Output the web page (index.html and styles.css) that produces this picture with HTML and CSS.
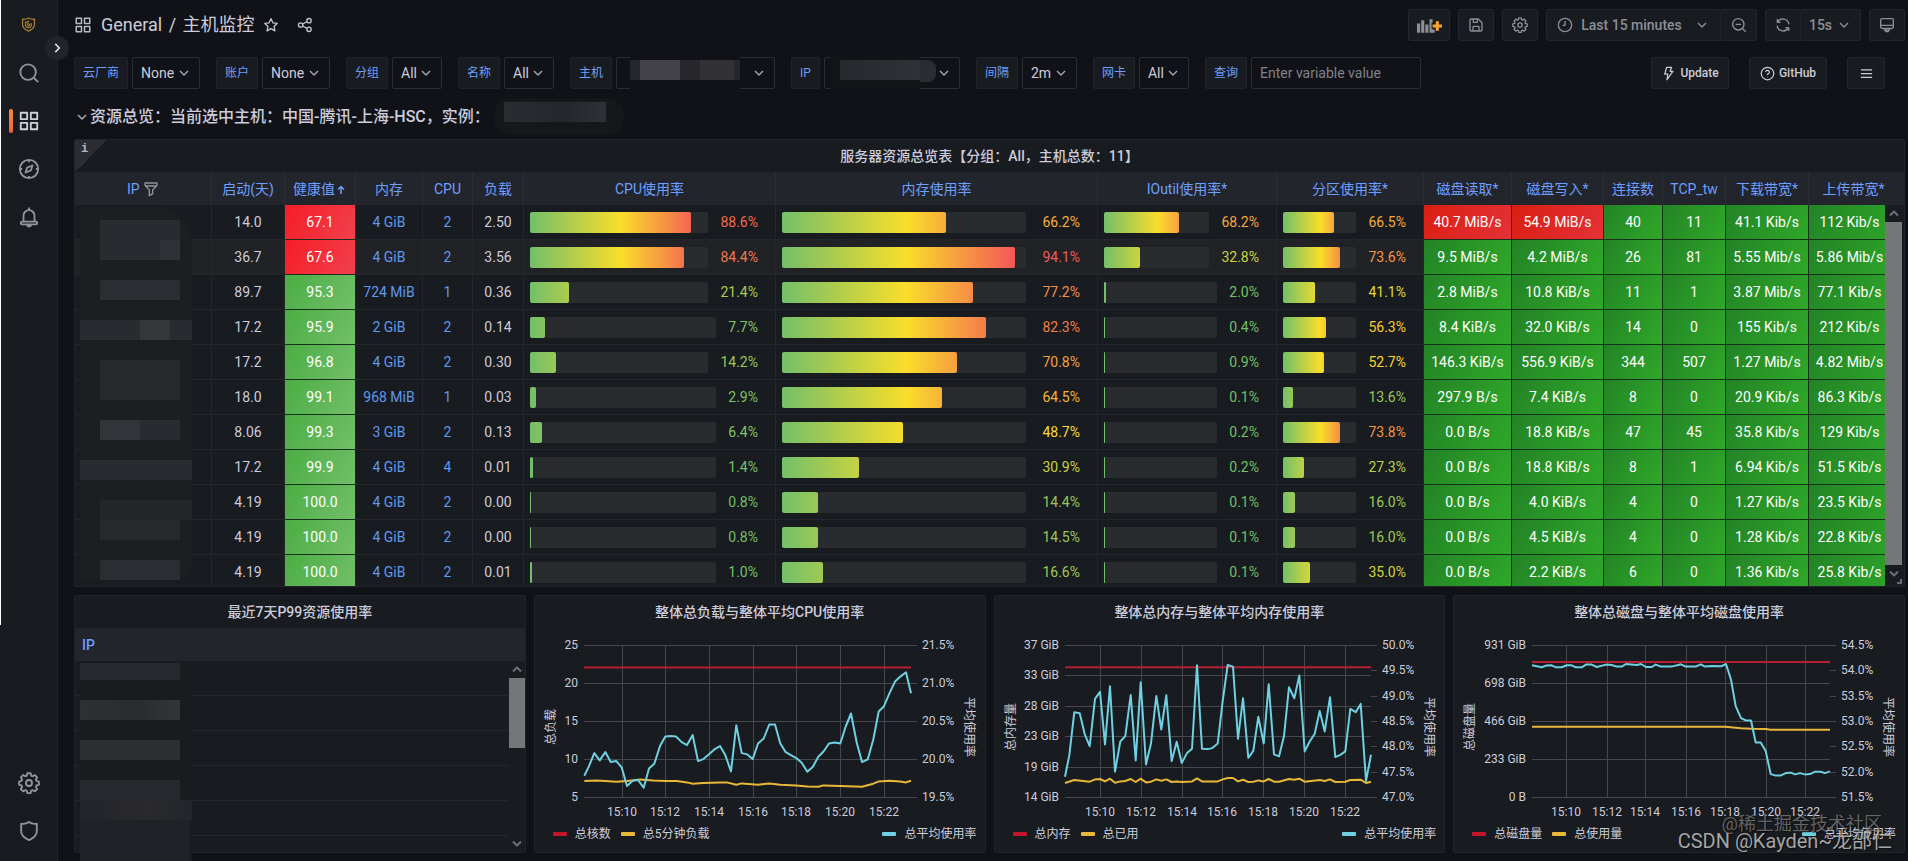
FILE: index.html
```html
<!DOCTYPE html>
<html lang="zh-CN">
<head>
<meta charset="utf-8">
<title>主机监控 - General</title>
<meta name="viewport" content="width=device-width, initial-scale=1">
<link rel="stylesheet" href="styles.css">
</head>
<body>
<svg class="sprite" aria-hidden="true">
  <symbol id="i-search" viewBox="0 0 24 24"><circle cx="11" cy="11" r="8.5"/><path d="M17.2 17.2 22 22"/></symbol>
  <symbol id="i-apps" viewBox="0 0 24 24"><path d="M3 3h7v7H3zM14 3h7v7h-7zM3 14h7v7H3zM14 14h7v7h-7z"/></symbol>
  <symbol id="i-compass" viewBox="0 0 24 24"><circle cx="12" cy="12" r="10"/><path d="M15.8 8.2 14 13.6l-5.8 2.2L10 10.4zM12 2v2.5M12 19.5V22M2 12h2.5M19.5 12H22"/></symbol>
  <symbol id="i-bell" viewBox="0 0 24 24"><path d="M12 1.5V4M6 17v-6.500a6 6 0 0 1 12 0V17M4.500 17h15a1.500 1.500 0 0 1 0 3h-15a1.500 1.500 0 0 1 0-3zM9.500 20.500a2.600 2.600 0 0 0 5 0"/></symbol>
  <symbol id="i-cog" viewBox="0 0 24 24"><circle cx="12" cy="12" r="3.300"/><path d="M10.200 2h3.600l.7 2.700 1.500.6 2.400-1.400 2.500 2.500-1.400 2.400.6 1.500 2.700.7v3.600l-2.700.7-.6 1.500 1.400 2.400-2.500 2.500-2.400-1.400-1.500.6-.7 2.700h-3.600l-.7-2.700-1.500-.6-2.400 1.400-2.500-2.500 1.400-2.400-.6-1.500L1.200 14.600V11l2.700-.7.6-1.500L3.100 6.400l2.500-2.500L8 5.300l1.500-.6z" transform="translate(0 -.6)"/></symbol>
  <symbol id="i-shield" viewBox="0 0 24 24"><path d="M12 2.200C9.500 4 6.500 4.600 3.500 4v8.500c0 4.500 4.500 7.500 8.500 9.500 4-2 8.500-5 8.500-9.500V4c-3 .6-6 0-8.500-1.800z"/></symbol>
  <symbol id="i-down" viewBox="0 0 24 24"><path d="m6 9 6 6 6-6"/></symbol>
  <symbol id="i-up" viewBox="0 0 24 24"><path d="m6 15 6-6 6 6"/></symbol>
  <symbol id="i-right" viewBox="0 0 24 24"><path d="m9 5 7 7-7 7"/></symbol>
  <symbol id="i-star" viewBox="0 0 24 24"><path d="m12 2.500 2.900 6.200 6.600.8-4.900 4.600 1.300 6.700-5.900-3.300-5.900 3.300 1.300-6.700L2.500 9.500l6.600-.8z"/></symbol>
  <symbol id="i-share" viewBox="0 0 24 24"><circle cx="18" cy="5.500" r="3.300"/><circle cx="5.500" cy="12" r="3.300"/><circle cx="18" cy="18.500" r="3.300"/><path d="m8.500 10.500 6.500-3.500M8.500 13.500l6.500 3.500"/></symbol>
  <symbol id="i-save" viewBox="0 0 24 24"><path d="M3 5a2 2 0 0 1 2-2h10.500L21 8.500V19a2 2 0 0 1-2 2H5a2 2 0 0 1-2-2zM8 3v5h6V3.500M7.500 21v-6a1 1 0 0 1 1-1h7a1 1 0 0 1 1 1v6"/></symbol>
  <symbol id="i-clock" viewBox="0 0 24 24"><circle cx="12" cy="12" r="10"/><path d="M12 6v6.500H8.500"/></symbol>
  <symbol id="i-zoomout" viewBox="0 0 24 24"><circle cx="11" cy="11" r="8.500"/><path d="M17.200 17.200 22 22M7 11h8"/></symbol>
  <symbol id="i-sync" viewBox="0 0 24 24"><path d="M3.500 3v5h5M3.800 8A9 9 0 0 1 20.800 11M20.500 21v-5h-5M20.200 16A9 9 0 0 1 3.200 13"/></symbol>
  <symbol id="i-monitor" viewBox="0 0 24 24"><path d="M4.500 2.500h15a2 2 0 0 1 2 2V15a2 2 0 0 1-2 2h-15a2 2 0 0 1-2-2V4.500a2 2 0 0 1 2-2zM2.500 12.500h19M8 17v2.500h8V17M10 19.500V22h4v-2.500"/></symbol>
  <symbol id="i-bolt" viewBox="0 0 24 24"><path d="M9 2h8l-2.500 6.500H19L9.500 22l1.500-9H6z"/></symbol>
  <symbol id="i-help" viewBox="0 0 24 24"><circle cx="12" cy="12" r="10"/><path d="M9 9.500A3 3 0 1 1 12 13v1.500M12 17v1"/></symbol>
  <symbol id="i-bars" viewBox="0 0 24 24"><path d="M3 6h18M3 12h18M3 18h18"/></symbol>
  <symbol id="i-filter" viewBox="0 0 24 24"><path d="M3 3h18v3.500l-6.500 7V19l-5 3v-8.500L3 6.500zM3.500 7.500h17"/></symbol>
  <symbol id="i-arrow" viewBox="0 0 24 24"><path d="M12 20V5M6 11l6-6 6 6"/></symbol>
</svg>

<nav class="sidebar" aria-label="主导航">
  <a class="nav-item logo" href="#" aria-label="首页">
    <svg viewBox="0 0 24 24"><path d="M12 1.500C9 3.500 6 4 2.500 3.500V12c0 5.500 5 8.500 9.500 10.500 4.500-2 9.500-5 9.500-10.500V3.500C18 4 15 3.500 12 1.500z"/><path d="M8 7.500c-2.500 4-1 9 4 10 4-.8 5.500-4.500 4-8M8.500 8.500 13 6.500M12 9.500c-2 1.500-2 4 .5 4.500 1.500-.5 1.500-2 .5-3"/></svg>
  </a>
  <a class="nav-item" href="#" aria-label="搜索"><svg class="icon"><use href="#i-search"/></svg></a>
  <a class="nav-item active" href="#" aria-label="仪表盘"><svg class="icon"><use href="#i-apps"/></svg></a>
  <a class="nav-item" href="#" aria-label="探索"><svg class="icon"><use href="#i-compass"/></svg></a>
  <a class="nav-item" href="#" aria-label="告警"><svg class="icon"><use href="#i-bell"/></svg></a>
  <span class="nav-space"></span>
  <a class="nav-item" href="#" aria-label="设置"><svg class="icon"><use href="#i-cog"/></svg></a>
  <a class="nav-item" href="#" aria-label="管理"><svg class="icon"><use href="#i-shield"/></svg></a>
  <button class="nav-toggle" type="button" aria-label="展开菜单"><svg class="icon"><use href="#i-right"/></svg></button>
</nav>

<main class="main">
  <header class="topbar">
    <svg class="icon head-icon"><use href="#i-apps"/></svg>
    <h1 class="crumbs"><a href="#">General</a> <span>/</span> <a href="#">主机监控</a></h1>
    <button class="plain" type="button" aria-label="收藏"><svg class="icon"><use href="#i-star"/></svg></button>
    <button class="plain share" type="button" aria-label="分享"><svg class="icon"><use href="#i-share"/></svg></button>
    <div class="tools">
      <button class="tool add" type="button" aria-label="添加面板">
        <svg class="add-icon" viewBox="0 0 24 14"><path class="bars" d="M0 5h3v9H0zM4 2h3v12H4zM8 6h3v8H8zM12 1h3v3h-1v6h1v4h-3zM15 11h2v3h-2z"/><path class="plus" d="M18 3h3v3h3v3h-3v3h-3V9h-3V6h3z"/></svg>
      </button>
      <button class="tool" type="button" aria-label="保存"><svg class="icon"><use href="#i-save"/></svg></button>
      <button class="tool" type="button" aria-label="设置"><svg class="icon"><use href="#i-cog"/></svg></button>
      <div class="tool-group">
        <button class="tool time" type="button"><svg class="icon"><use href="#i-clock"/></svg><span>Last 15 minutes</span><svg class="icon chev"><use href="#i-down"/></svg></button>
        <button class="tool" type="button" aria-label="缩小"><svg class="icon"><use href="#i-zoomout"/></svg></button>
      </div>
      <div class="tool-group">
        <button class="tool" type="button" aria-label="刷新"><svg class="icon"><use href="#i-sync"/></svg></button>
        <button class="tool every" type="button"><span>15s</span><svg class="icon chev"><use href="#i-down"/></svg></button>
      </div>
      <button class="tool" type="button" aria-label="视图模式"><svg class="icon"><use href="#i-monitor"/></svg></button>
    </div>
  </header>

  <form class="vars">
    <div class="var"><label for="v1">云厂商</label><span class="pick"><select id="v1" class="w-none"><option>None</option></select><svg class="icon"><use href="#i-down"/></svg></span></div>
    <div class="var"><label for="v2">账户</label><span class="pick"><select id="v2" class="w-none"><option>None</option></select><svg class="icon"><use href="#i-down"/></svg></span></div>
    <div class="var"><label for="v3">分组</label><span class="pick"><select id="v3" class="w-all"><option>All</option></select><svg class="icon"><use href="#i-down"/></svg></span></div>
    <div class="var"><label for="v4">名称</label><span class="pick"><select id="v4" class="w-all"><option>All</option></select><svg class="icon"><use href="#i-down"/></svg></span></div>
    <div class="var"><label for="v5">主机</label><span class="pick"><select id="v5" class="w-host"></select><i class="mask mask-host"></i><svg class="icon"><use href="#i-down"/></svg></span></div>
    <div class="var"><label for="v6">IP</label><span class="pick"><select id="v6" class="w-ip"></select><i class="mask mask-ip"></i><svg class="icon"><use href="#i-down"/></svg></span></div>
    <div class="var"><label for="v7">间隔</label><span class="pick"><select id="v7" class="w-step"><option>2m</option></select><svg class="icon"><use href="#i-down"/></svg></span></div>
    <div class="var"><label for="v8">网卡</label><span class="pick"><select id="v8" class="w-all"><option>All</option></select><svg class="icon"><use href="#i-down"/></svg></span></div>
    <div class="var"><label for="v9">查询</label><input id="v9" type="text" placeholder="Enter variable value"></div>
    <div class="links">
      <a class="link" href="#"><svg class="icon"><use href="#i-bolt"/></svg>Update</a>
      <a class="link" href="#"><svg class="icon"><use href="#i-help"/></svg>GitHub</a>
      <button class="link menu" type="button" aria-label="菜单"><svg class="icon"><use href="#i-bars"/></svg></button>
    </div>
  </form>

  <h2 class="row-title"><svg class="icon"><use href="#i-down"/></svg><span>资源总览：当前选中主机：中国-腾讯-上海-HSC，实例：</span><i class="mask-row"></i></h2>

  <section class="panel overview">
    <span class="info">i</span>
    <h3 class="panel-title">服务器资源总览表【分组：All，主机总数：11】</h3>
    <div class="viewport">
      <table class="hosts">
        <colgroup>
          <col class="c-ip"><col class="c-up"><col class="c-score"><col class="c-ram"><col class="c-cores"><col class="c-load"><col class="c-cpu"><col><col class="c-io"><col class="c-part"><col class="c-read"><col class="c-write"><col class="c-conn"><col class="c-tw"><col class="c-down"><col class="c-upl">
        </colgroup>
        <thead>
          <tr>
            <th>IP <svg class="icon filter"><use href="#i-filter"/></svg></th><th>启动(天)</th><th>健康值<svg class="icon sort"><use href="#i-arrow"/></svg></th><th>内存</th><th>CPU</th><th>负载</th><th>CPU使用率</th><th>内存使用率</th><th>IOutil使用率*</th><th>分区使用率*</th><th>磁盘读取*</th><th>磁盘写入*</th><th>连接数</th><th>TCP_tw</th><th>下载带宽*</th><th>上传带宽*</th>
          </tr>
        </thead>
        <tbody id="hosts"></tbody>
      </table>
      <i class="mask-list"></i>
      <div class="scroll"><svg class="icon"><use href="#i-up"/></svg><span class="thumb"></span><svg class="icon"><use href="#i-down"/></svg></div>
      <i class="grip"></i>
    </div>
  </section>

  <div class="charts">
    <section class="panel recent">
      <h3 class="panel-title">最近7天P99资源使用率</h3>
      <div class="recent-view">
        <table class="recent-table">
          <thead><tr><th>IP</th></tr></thead>
          <tbody><tr><td></td></tr><tr><td></td></tr><tr><td></td></tr><tr><td></td></tr><tr><td></td></tr></tbody>
        </table>
        <i class="mask-recent"></i>
        <div class="scroll short"><svg class="icon"><use href="#i-up"/></svg><span class="thumb"></span><svg class="icon"><use href="#i-down"/></svg></div>
      </div>
    </section>
    <section class="panel">
      <h3 class="panel-title">整体总负载与整体平均CPU使用率</h3>
      <div class="plot" data-chart="cpu"></div>
      <div class="legend"><span class="red">总核数</span><span class="yellow">总5分钟负载</span><span class="blue">总平均使用率</span></div>
    </section>
    <section class="panel">
      <h3 class="panel-title">整体总内存与整体平均内存使用率</h3>
      <div class="plot" data-chart="mem"></div>
      <div class="legend"><span class="red">总内存</span><span class="yellow">总已用</span><span class="blue">总平均使用率</span></div>
    </section>
    <section class="panel">
      <h3 class="panel-title">整体总磁盘与整体平均磁盘使用率</h3>
      <div class="plot" data-chart="disk"></div>
      <div class="legend"><span class="red">总磁盘量</span><span class="yellow">总使用量</span><span class="blue">总平均使用率</span></div>
    </section>
  </div>
</main>
<div class="stamp stamp-site">@稀土掘金技术社区</div>
<div class="stamp stamp-author">CSDN @Kayden~龙邵仁</div>
<script src="app.js"></script>
</body>
</html>
```
FILE: styles.css
```css
* { box-sizing: border-box; }

body {
  margin: 0;
  min-height: 100vh;
  display: flex;
  position: relative;
  overflow-x: hidden;
  background: #111217;
  color: #ccccdc;
  font: 14px/20px Roboto, "Noto Sans CJK SC", sans-serif;
}

a { color: inherit; text-decoration: none; }
button, input, select { font: inherit; color: inherit; }
h1, h2, h3 { margin: 0; font-weight: 400; }
.sprite { position: absolute; width: 0; height: 0; }
.icon {
  width: 16px;
  height: 16px;
  flex: none;
  fill: none;
  stroke: currentColor;
  stroke-width: 2;
  stroke-linejoin: round;
}

/* Sidebar */
.sidebar {
  position: relative;
  flex: none;
  width: 58px;
  display: flex;
  flex-direction: column;
  padding-bottom: 6px;
  border-right: 1px solid #22242a;
  background: linear-gradient(#fff, #fff) 0 0 / 1px 625px no-repeat, #181b1f;
}
.nav-item {
  position: relative;
  height: 48px;
  display: flex;
  align-items: center;
  justify-content: center;
  color: #93949e;
}
.nav-item .icon { width: 22px; height: 22px; }
.nav-item.active { color: #d0d0dc; }
.nav-item.active::before {
  content: "";
  position: absolute;
  left: 9px;
  top: 12px;
  width: 4px;
  height: 24px;
  border-radius: 2px;
  background: linear-gradient(#f08c3c, #f0643c);
}
.logo { height: 49px; }
.logo svg { width: 15px; height: 15px; fill: none; stroke: #a8812e; stroke-width: 2; }
.nav-space { flex: 1; }
.nav-toggle {
  position: absolute;
  left: 45px;
  top: 36px;
  width: 24px;
  height: 24px;
  padding: 0;
  display: flex;
  align-items: center;
  justify-content: center;
  border: 0;
  border-radius: 50%;
  background: #212429;
  color: #dcdce6;
  z-index: 2;
}
.nav-toggle .icon { width: 14px; height: 14px; stroke-width: 3; }

/* Top bar */
.main { flex: 1; min-width: 0; padding: 0 3px 8px 16px; }
.topbar { height: 50px; display: flex; align-items: center; }
.head-icon { width: 18px; height: 18px; color: #b9b9c6; }
.crumbs { margin: 0 8px 0 9px; font-size: 18px; line-height: 24px; white-space: nowrap; }
.crumbs span { margin: 0 2px; }
.plain { display: flex; padding: 0; border: 0; background: none; color: #c3c3d0; }
.share { margin-left: 18px; }
.tools { margin-left: auto; display: flex; gap: 8px; color: #8d8e97; }
.tool {
  height: 32px;
  width: 36px;
  padding: 0;
  display: flex;
  align-items: center;
  justify-content: center;
  border: 1px solid #24262c;
  border-radius: 2px;
  background: #181b1f;
  font-weight: 500;
}
.tool-group { display: flex; }
.tool-group .tool + .tool { border-left-color: #202228; margin-left: -1px; width: 37px; }
.add { width: 42px; }
.add-icon { width: 25px; height: 15px; }
.add-icon .bars { fill: #8d8e97; }
.add-icon .plus { fill: #f7a32d; }
.tool.time { width: 175px; gap: 8px; }
.tool.time .chev { margin-left: 4px; }
.tool-group .tool.every { width: 61px; gap: 4px; }

/* Variables */
.vars { display: flex; gap: 16px; margin-top: 7px; padding-right: 20px; }
.var { display: flex; gap: 4px; }
.var label {
  height: 32px;
  padding: 0 8px;
  border: 1px solid #202329;
  border-radius: 2px;
  background: #181b1f;
  color: #6e9fff;
  font-size: 12px;
  line-height: 30px;
  white-space: nowrap;
}
.pick { position: relative; display: block; }
.pick .icon { position: absolute; right: 8px; top: 8px; color: #a8a8b5; pointer-events: none; }
.pick select, .var input {
  display: block;
  height: 32px;
  margin: 0;
  padding: 0 8px;
  border: 1px solid #2b2d34;
  border-radius: 2px;
  background: #111217;
  appearance: none;
}
.w-none { width: 68px; }
.w-all { width: 50px; }
.w-step { width: 55px; }
.w-host { width: 159px; }
.w-ip { width: 136px; }
.var input { width: 170px; }
.var input::placeholder { color: #80818b; opacity: 1; }
.mask { position: absolute; top: 0; height: 32px; }
.mask-host {
  left: 14px;
  width: 110px;
  background:
    linear-gradient(#424248, #424248) 10px 3px / 40px 20px no-repeat,
    linear-gradient(#313136, #313136) 70px 3px / 34px 20px no-repeat,
    linear-gradient(#26272c, #26272c) 0 3px / 110px 20px no-repeat,
    #111217;
}
.mask-ip {
  left: 6px;
  width: 90px;
  background:
    linear-gradient(90deg, #28292e, #303136) 10px 3px / 80px 20px no-repeat,
    #121317;
}
.mask-ip::after {
  content: "";
  position: absolute;
  left: 90px;
  top: 3px;
  width: 16px;
  height: 22px;
  border-radius: 0 8px 8px 0;
  background: #2b2c31;
}
.links { margin-left: auto; display: flex; gap: 20px; }
.link {
  height: 32px;
  width: 78px;
  padding: 0;
  display: flex;
  align-items: center;
  justify-content: center;
  gap: 4px;
  border: 1px solid #24262c;
  border-radius: 2px;
  background: #181b1f;
  color: #ccccdc;
  font-size: 12px;
  font-weight: 500;
}
.link .icon { width: 15px; height: 15px; }
.link.menu { width: 38px; }

/* Row heading */
.row-title {
  display: flex;
  align-items: center;
  height: 50px;
  padding-top: 6px;
  font-size: 16px;
  font-weight: 500;
  white-space: nowrap;
}
.row-title .icon { color: #b0b0bd; }
.mask-row {
  width: 130px;
  height: 36px;
  margin-left: 4px;
  border-radius: 16px;
  background: linear-gradient(90deg, #2b2c31, #26272c 60%, #303136) 10px 3px / 102px 20px no-repeat, #16171b;
}

/* Panels */
.panel {
  position: relative;
  min-width: 0;
  border: 1px solid #222429;
  border-radius: 2px;
  background: #181b1f;
}
.panel-title {
  height: 32px;
  font-size: 14px;
  font-weight: 500;
  line-height: 32px;
  text-align: center;
  white-space: nowrap;
}
.info {
  position: absolute;
  left: 0;
  top: 0;
  width: 32px;
  height: 32px;
  padding-left: 6px;
  background: linear-gradient(135deg, #2b2d32 50%, transparent 50%);
  color: #b5b5c2;
  font: bold 12px/18px "Liberation Mono", monospace;
}
.viewport { position: relative; height: 414px; overflow: hidden; }
.hosts { width: 100%; table-layout: fixed; border-spacing: 0; }
.hosts th, .hosts td {
  padding: 0;
  border-right: 1px solid #24262b;
  text-align: center;
  white-space: nowrap;
  overflow: hidden;
}
.hosts th {
  height: 33px;
  border-right-color: #2b2e34;
  background: #22252b;
  color: #6e9fff;
  font-weight: 400;
}
.hosts th .icon { vertical-align: -3px; }
.hosts th .sort { width: 12px; height: 12px; vertical-align: -2px; stroke-width: 3; }
.filter { color: #92939d; }
.hosts td { height: 35px; border-bottom: 1px solid #24262b; background-clip: padding-box; }
.hosts tr.hover td { background-color: #202226; }
.hosts th:last-child, .hosts td:last-child { border-right: 0; }
.hosts td:last-child { padding-right: 14px; }
.hosts th:last-child { padding-right: 6px; }
.c-ip { width: 137px; }
.c-up { width: 73px; }
.c-score { width: 71px; }
.c-ram { width: 67px; }
.c-cores { width: 50px; }
.c-load { width: 51px; }
.c-cpu { width: 252px; }
.c-io { width: 179px; }
.c-part { width: 147px; }
.c-read { width: 88px; }
.c-write { width: 92px; }
.c-conn { width: 59px; }
.c-tw { width: 63px; }
.c-down { width: 83px; }
.c-upl { width: 95px; }
.hosts .blue { color: #5f98ee; }
.hosts td.ok, .hosts td.bad, .hosts td.fine, .hosts td.hot { color: #fff; border-color: #17301a; }
.hosts td.bad { background-image: linear-gradient(120deg, #f51d26, #f2404e); }
.hosts td.ok { background-image: linear-gradient(120deg, #4aad44, #73bf69); }
.hosts td.hot { background-image: linear-gradient(120deg, #d91f12, #e53138); }
.hosts td.fine { background-image: linear-gradient(120deg, #238326, #2fa829); }

.gauge { display: flex; align-items: center; gap: 12px; padding: 0 17px 0 6px; }
.gauge.wide { gap: 16px; }
.track { flex: 1; height: 21px; border-radius: 2px; background: #292c2f; }
.fill {
  display: block;
  height: 100%;
  min-width: 1px;
  width: calc(var(--v) * 1%);
  border-radius: 2px;
  background: linear-gradient(90deg, #73bf69, #fade2a 51%, #f2495c) 0 0 / calc(10000% / var(--v)) 100% no-repeat;
}

/* Scroll bars */
.scroll {
  position: absolute;
  right: 2px;
  top: 33px;
  bottom: 0;
  width: 17px;
  display: flex;
  flex-direction: column;
  align-items: center;
  background: #181b1f;
  box-shadow: 2px 0 #181b1f;
  color: #6e6f75;
}
.scroll .icon { height: 17px; stroke-width: 3; }
.scroll .thumb { flex: 1; width: 100%; background: #75767a; }
.viewport .scroll { padding-bottom: 4px; }
.scroll.short { right: 0; width: 16px; box-shadow: none; }
.scroll.short .thumb { flex: 0 0 70px; margin-bottom: auto; }
.grip {
  position: absolute;
  right: 2px;
  bottom: 2px;
  width: 5px;
  height: 5px;
  border-right: 2px solid #6a6b70;
  border-bottom: 2px solid #6a6b70;
}

/* Obscured addresses */
.mask-list {
  position: absolute;
  left: 5px;
  top: 34px;
  width: 112px;
  height: 375px;
  border-radius: 0 40px 20px 0;
  background:
    linear-gradient(#2f3136, #2f3136) 80px 34px / 20px 20px no-repeat,
    linear-gradient(#292b30, #292b30) 20px 14px / 80px 40px no-repeat,
    linear-gradient(#2b2e33, #2b2e33) 20px 74px / 80px 20px no-repeat,
    linear-gradient(#35363a, #35363a) 60px 114px / 30px 20px no-repeat,
    linear-gradient(#292b30, #292b30) 0 114px / 112px 20px no-repeat,
    linear-gradient(#26282c, #26282c) 20px 154px / 80px 40px no-repeat,
    linear-gradient(#333439, #333439) 20px 214px / 40px 20px no-repeat,
    linear-gradient(#292b31, #292b31) 60px 214px / 40px 20px no-repeat,
    linear-gradient(#2a2b30, #2a2b30) 0 254px / 112px 20px no-repeat,
    linear-gradient(#24262a, #24262a) 20px 294px / 92px 20px no-repeat,
    linear-gradient(#28292c, #28292c) 20px 314px / 80px 20px no-repeat,
    linear-gradient(#2b2d33, #2b2d33) 20px 354px / 80px 20px no-repeat,
    #1c1e22;
}
.mask-recent {
  position: absolute;
  left: 5px;
  top: 35px;
  width: 112px;
  height: 198px;
  background:
    linear-gradient(#26282d, #26282d) 0 0 / 100px 17px no-repeat,
    linear-gradient(90deg, #2d2f33, #2a2d30 60%, #34353a) 0 37px / 100px 20px no-repeat,
    linear-gradient(#2c2e32, #2c2e32) 0 77px / 100px 20px no-repeat,
    linear-gradient(#26282d, #26282d) 0 117px / 100px 20px no-repeat,
    linear-gradient(90deg, #22242b, #2a2a2d 60%, #22252a) 0 137px / 112px 20px no-repeat,
    linear-gradient(#1f2226, #1f2226) 0 157px / 110px 41px no-repeat,
    #191b1f;
}

/* Lower row */
.charts { display: grid; grid-template-columns: repeat(4, 1fr); gap: 8px; margin-top: 8px; }
.recent-view { position: relative; height: 224px; }
.recent-table { width: 100%; border-spacing: 0; }
.recent-table th {
  height: 33px;
  padding: 0 7px;
  background: #22252b;
  color: #6e9fff;
  font-weight: 500;
  text-align: left;
}
.recent-table td { height: 35px; padding: 0; border-bottom: 1px solid #24262b; }
.plot { height: 194px; overflow: hidden; }
.plot svg { display: block; }
.plot text { fill: #ccccdc; font-size: 12px; }
.grid { stroke: #47484d; fill: none; shape-rendering: crispEdges; }
.line { fill: none; stroke-width: 2; stroke-linejoin: round; }
.line.red { stroke: #b51f33; }
.line.yellow { stroke: #eab839; }
.line.blue { stroke: #6ed0e0; }
.legend {
  display: flex;
  gap: 10px;
  height: 24px;
  margin-bottom: 6px;
  padding: 0 8px 0 18px;
  font-size: 12px;
  line-height: 24px;
  white-space: nowrap;
}
.legend span { display: flex; align-items: center; gap: 8px; }
.legend span::before { content: ""; width: 14px; height: 4px; border-radius: 1px; }
.legend .red::before { background: #c4162a; }
.legend .yellow::before { background: #eab839; }
.legend .blue::before { background: #6ed0e0; }
.legend .blue { margin-left: auto; }

/* Image stamps */
.stamp { position: absolute; white-space: nowrap; pointer-events: none; text-shadow: 1px 1px 1px #0008; }
.stamp-site { right: 26px; top: 812px; font-size: 18px; line-height: 24px; color: #b4b4b480; }
.stamp-author { right: 16px; top: 828px; font-size: 20px; line-height: 26px; color: #c8c8c8d0; }
```
FILE: app.js
```js
const hosts = [
  ["14.0", 67.1, "4 GiB", 2, "2.50", 88.6, 66.2, 68.2, 66.5, "40.7 MiB/s", "54.9 MiB/s", 40, 11, "41.1 Kib/s", "112 Kib/s"],
  ["36.7", 67.6, "4 GiB", 2, "3.56", 84.4, 94.1, 32.8, 73.6, "9.5 MiB/s", "4.2 MiB/s", 26, 81, "5.55 Mib/s", "5.86 Mib/s"],
  ["89.7", 95.3, "724 MiB", 1, "0.36", 21.4, 77.2, 2.0, 41.1, "2.8 MiB/s", "10.8 KiB/s", 11, 1, "3.87 Mib/s", "77.1 Kib/s"],
  ["17.2", 95.9, "2 GiB", 2, "0.14", 7.7, 82.3, 0.4, 56.3, "8.4 KiB/s", "32.0 KiB/s", 14, 0, "155 Kib/s", "212 Kib/s"],
  ["17.2", 96.8, "4 GiB", 2, "0.30", 14.2, 70.8, 0.9, 52.7, "146.3 KiB/s", "556.9 KiB/s", 344, 507, "1.27 Mib/s", "4.82 Mib/s"],
  ["18.0", 99.1, "968 MiB", 1, "0.03", 2.9, 64.5, 0.1, 13.6, "297.9 B/s", "7.4 KiB/s", 8, 0, "20.9 Kib/s", "86.3 Kib/s"],
  ["8.06", 99.3, "3 GiB", 2, "0.13", 6.4, 48.7, 0.2, 73.8, "0.0 B/s", "18.8 KiB/s", 47, 45, "35.8 Kib/s", "129 Kib/s"],
  ["17.2", 99.9, "4 GiB", 4, "0.01", 1.4, 30.9, 0.2, 27.3, "0.0 B/s", "18.8 KiB/s", 8, 1, "6.94 Kib/s", "51.5 Kib/s"],
  ["4.19", 100, "4 GiB", 2, "0.00", 0.8, 14.4, 0.1, 16.0, "0.0 B/s", "4.0 KiB/s", 4, 0, "1.27 Kib/s", "23.5 Kib/s"],
  ["4.19", 100, "4 GiB", 2, "0.00", 0.8, 14.5, 0.1, 16.0, "0.0 B/s", "4.5 KiB/s", 4, 0, "1.28 Kib/s", "22.8 Kib/s"],
  ["4.19", 100, "4 GiB", 2, "0.01", 1.0, 16.6, 0.1, 35.0, "0.0 B/s", "2.2 KiB/s", 6, 0, "1.36 Kib/s", "25.8 Kib/s"]
];

const stops = [[115, 191, 105], [250, 222, 42], [242, 73, 92]];

function colorAt(v) {
  const t = v / 50;
  const i = t < 1 ? 0 : 1;
  return "rgb(" + stops[i].map((c, k) => Math.round(c + (stops[i + 1][k] - c) * (t - i))).join(",") + ")";
}

function gauge(v, max, cls = "") {
  return `<td><div class="gauge ${cls}"><span class="track"><span class="fill" style="--v:${(v / max * 100).toFixed(1)}"></span></span>` +
    `<span style="color:${colorAt(v)}">${v.toFixed(1)}%</span></div></td>`;
}

document.getElementById("hosts").innerHTML = hosts.map((h, i) => {
  const disk = i === 0 ? "hot" : "fine";
  return `<tr${i === 1 ? ' class="hover"' : ""}><td></td><td>${h[0]}</td>` +
    `<td class="${h[1] < 80 ? "bad" : "ok"}">${h[1].toFixed(1)}</td>` +
    `<td class="blue">${h[2]}</td><td class="blue">${h[3]}</td><td>${h[4]}</td>` +
    gauge(h[5], 98) + gauge(h[6], 98.7, "wide") + gauge(h[7], 96) + gauge(h[8], 95.5) +
    `<td class="${disk}">${h[9]}</td><td class="${disk}">${h[10]}</td>` +
    h.slice(11).map(v => `<td class="fine">${v}</td>`).join("") + "</tr>";
}).join("");

/* Each series is a list of x,y samples inside the chart's own box [x0, y0, x1, y1]. */
const charts = {
  cpu: {
    box: [162, 196, 1143, 653], left: 49, names: ["总负载", "平均使用率"],
    yl: ["25", "20", "15", "10", "5"], yr: ["21.5%", "21.0%", "20.5%", "20.0%", "19.5%"],
    ticks: [275, 406, 538, 668, 799, 931, 1061], red: 264,
    yellow: "163,605 200,603 226,605 259,607 291,605 330,600 370,603 406,605 440,605 471,609 488,613 520,611 570,609 590,609 619,616 635,612 684,616 718,612 751,616 799,618 832,621 865,622 880,618 931,620 996,622 1030,613 1046,606 1078,604 1111,606 1128,609 1143,604",
    blue: "163,589 177,560 193,521 209,543 226,518 242,548 259,545 275,564 291,620 308,604 324,602 341,625 357,567 373,553 390,500 406,471 422,470 438,471 455,488 471,497 488,467 504,545 520,539 538,524 553,510 570,500 586,527 603,576 619,437 635,521 652,525 668,539 684,492 701,477 718,435 735,435 751,492 767,518 784,528 799,536 815,550 832,577 848,563 865,532 880,517 897,492 914,489 931,492 947,441 963,402 980,489 996,548 1013,540 1030,480 1046,396 1062,380 1078,342 1095,306 1111,291 1128,278 1143,341"
  },
  mem: {
    box: [241, 196, 1159, 653], left: 70, names: ["总内存量", "平均使用率"],
    yl: ["37 GiB", "33 GiB", "28 GiB", "23 GiB", "19 GiB", "14 GiB"], yr: ["50.0%", "49.5%", "49.0%", "48.5%", "48.0%", "47.5%", "47.0%"],
    ticks: [346, 469, 592, 712, 836, 959, 1081], red: 263,
    yellow: "241,611 269,602 315,607 331,600 346,599 361,606 376,598 391,610 407,606 422,605 438,599 453,608 468,598 484,609 499,607 515,600 530,604 545,600 561,608 576,606 591,608 622,606 637,597 652,606 699,606 714,600 729,596 745,596 760,606 775,601 791,608 806,607 821,603 837,606 852,599 868,607 883,607 913,599 929,601 944,598 960,607 1005,602 1020,605 1036,600 1052,608 1082,607 1097,602 1128,601 1144,611 1159,607",
    blue: "241,592 254,528 269,398 285,401 300,464 315,500 331,358 346,337 361,495 376,320 391,577 407,486 422,470 438,346 453,543 468,308 484,555 499,492 515,349 530,450 545,347 561,545 576,487 591,551 607,521 622,508 637,257 652,508 670,509 683,506 699,492 714,364 729,256 745,261 760,478 775,356 791,535 806,514 821,412 837,492 852,314 868,525 883,531 898,470 913,323 929,356 944,288 960,516 975,486 990,463 1005,394 1020,456 1036,353 1052,533 1067,526 1082,516 1097,388 1113,398 1128,373 1144,605 1159,526"
  },
  disk: {
    box: [261, 196, 1155, 653], left: 78, names: ["总磁盘量", "平均使用率"],
    yl: ["931 GiB", "698 GiB", "466 GiB", "233 GiB", "0 B"], yr: ["54.5%", "54.0%", "53.5%", "53.0%", "52.5%", "52.0%", "51.5%"],
    ticks: [364, 485, 601, 722, 841, 962, 1081], red: 247,
    yellow: "261,442 841,442 888,446 918,448 962,449 977,451 1155,451",
    blue: "261,257 290,263 303,258 320,257 333,263 350,263 365,257 380,257 393,263 410,263 423,255 440,255 455,262 484,255 500,256 515,261 530,261 543,253 575,256 588,253 603,262 620,262 632,255 648,261 680,261 708,254 722,261 752,261 767,254 780,261 800,259 828,260 843,253 858,300 872,380 888,416 903,423 918,423 932,489 947,489 962,515 977,584 990,588 1008,588 1022,581 1038,580 1050,585 1065,581 1080,585 1095,584 1110,577 1127,577 1140,581 1155,576"
  }
};

const TOP = 17, HEIGHT = 152, RIGHT = 74, OVERHANG = 6;

function draw(el) {
  const c = charts[el.dataset.chart];
  const width = el.clientWidth;
  const end = width - RIGHT;
  const bottom = TOP + HEIGHT;
  const [x0, y0, x1, y1] = c.box;
  const px = x => c.left + (x - x0) / (x1 - x0) * (end - c.left);
  const py = y => TOP + (y - y0) / (y1 - y0) * HEIGHT;
  const path = s => s.split(" ").map(p => { const [x, y] = p.split(",").map(Number); return px(x).toFixed(1) + "," + py(y).toFixed(1); }).join(" ");
  let out = "";
  c.yl.forEach((t, i) => {
    const y = Math.round(TOP + HEIGHT * i / (c.yl.length - 1));
    out += `<path class="grid" d="M${c.left} ${y}H${end}"/><text x="${c.left - 6}" y="${y + 4}" text-anchor="end">${t}</text>`;
  });
  c.yr.forEach((t, i) => {
    const y = Math.round(TOP + HEIGHT * i / (c.yr.length - 1));
    out += `<path class="grid" d="M${end} ${y}h${OVERHANG}"/><text x="${end + 11}" y="${y + 4}">${t}</text>`;
  });
  c.ticks.forEach((t, i) => {
    const x = Math.round(px(t));
    out += `<path class="grid" d="M${x} ${TOP}V${bottom}"/><text x="${x}" y="${bottom + 19}" text-anchor="middle">15:${10 + i * 2}</text>`;
  });
  const mid = TOP + HEIGHT / 2 + 6;
  out += `<text transform="translate(20 ${mid}) rotate(-90)" text-anchor="middle">${c.names[0]}</text>`;
  out += `<text transform="translate(${width - 20} ${mid}) rotate(90)" text-anchor="middle">${c.names[1]}</text>`;
  out += `<path class="line red" d="M${c.left} ${py(c.red)}H${end}"/>`;
  out += `<polyline class="line yellow" points="${path(c.yellow)}"/><polyline class="line blue" points="${path(c.blue)}"/>`;
  el.innerHTML = `<svg width="${width}" height="194">${out}</svg>`;
}

function drawAll() { document.querySelectorAll(".plot").forEach(draw); }
drawAll();
window.addEventListener("resize", drawAll);
```
